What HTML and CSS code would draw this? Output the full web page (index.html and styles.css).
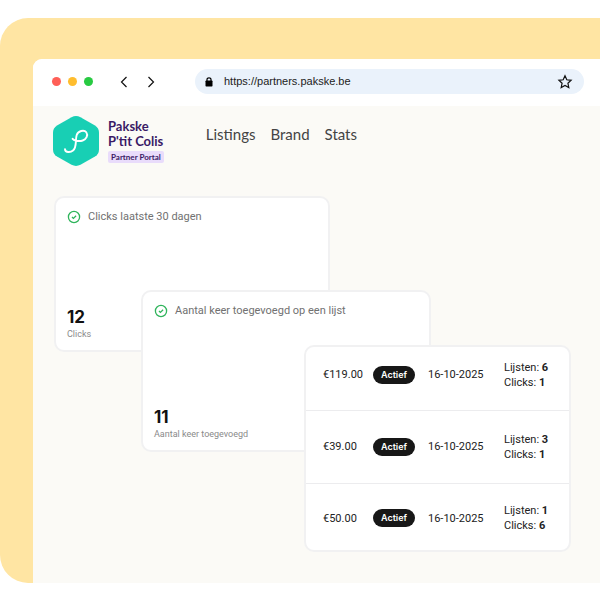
FILE: index.html
```html
<!DOCTYPE html>
<html lang="nl">
<head>
<meta charset="utf-8">
<meta name="viewport" content="width=device-width, initial-scale=1">
<title>Pakske Partner Portal</title>
<link rel="stylesheet" href="styles.css">
</head>
<body>
<div class="backdrop">
  <div class="browser">
    <div class="toolbar">
      <div class="lights"><span class="light red"></span><span class="light amber"></span><span class="light green"></span></div>
      <div class="history">
        <button type="button" aria-label="Back"><svg width="8" height="12" viewBox="0 0 8 12"><path d="M6.500 1 1.500 6l5 5"/></svg></button>
        <button type="button" aria-label="Forward"><svg width="8" height="12" viewBox="0 0 8 12"><path d="m1.500 1 5 5-5 5"/></svg></button>
      </div>
      <div class="address">
        <svg class="lock" width="8" height="10" viewBox="0 0 8 10"><path d="M2 4V2.500a2 1.700 0 0 1 4 0V4" fill="none" stroke="#000" stroke-width="1.200"/><rect x="0.500" y="3.500" width="7" height="6" rx="0.700"/></svg>
        <input type="text" aria-label="Address" value="https://partners.pakske.be">
        <button type="button" aria-label="Bookmark"><svg width="16" height="16" viewBox="0 0 16 16"><path d="m8 1.800 1.800 4 4.300.5-3.200 2.900.9 4.300L8 11.400l-3.800 2.100.9-4.300-3.200-2.900 4.300-.5z"/></svg></button>
      </div>
    </div>
    <header class="header">
      <a class="brand" href="#">
        <svg width="46" height="50" viewBox="0 0 46 50"><path d="M18.500 1.200q4.500-2.300 9 0l14.500 8.300q4 2.500 4 7v17q0 4.500-4 7l-14.500 8.300q-4.500 2.300-9 0L4 40.500q-4-2.500-4-7v-17q0-4.500 4-7z" fill="#18cfb4"/><path d="M12 33.300c.3 3.500 5.600 3.300 8 1.300 4.200-3.600 2-10.300 3.700-15.600 1.300-4.100 7.400-5.700 9.600-2.700 2.100 3-.1 7.100-3.600 8.200-3.600 1.200-8.500.3-10.100-1.700" fill="none" stroke="#fff" stroke-width="1.900" stroke-linecap="round"/></svg>
        <span class="brand-text"><span class="name">Pakske</span><span class="name">P'tit Colis</span><span class="portal">Partner Portal</span></span>
      </a>
      <nav class="nav"><a href="#">Listings</a><a href="#">Brand</a><a href="#">Stats</a></nav>
    </header>
    <main class="cards">
      <section class="card stat clicks">
        <h2><svg class="check" width="14" height="14" viewBox="0 0 14 14"><circle cx="7" cy="7" r="5.600"/><path d="m5 7 1.400 1.400L9.100 5.800"/></svg>Clicks laatste 30 dagen</h2>
        <div><p class="value">12</p><p class="caption">Clicks</p></div>
      </section>
      <section class="card stat added">
        <h2><svg class="check" width="14" height="14" viewBox="0 0 14 14"><circle cx="7" cy="7" r="5.600"/><path d="m5 7 1.400 1.400L9.100 5.800"/></svg>Aantal keer toegevoegd op een lijst</h2>
        <div><p class="value">11</p><p class="caption">Aantal keer toegevoegd</p></div>
      </section>
      <section class="card listings">
        <table>
          <tbody>
            <tr><td class="price">€119.00</td><td class="status"><span class="badge">Actief</span></td><td class="date">16-10-2025</td><td>Lijsten: <b>6</b><br>Clicks: <b>1</b></td></tr>
            <tr><td class="price">€39.00</td><td class="status"><span class="badge">Actief</span></td><td class="date">16-10-2025</td><td>Lijsten: <b>3</b><br>Clicks: <b>1</b></td></tr>
            <tr><td class="price">€50.00</td><td class="status"><span class="badge">Actief</span></td><td class="date">16-10-2025</td><td>Lijsten: <b>1</b><br>Clicks: <b>6</b></td></tr>
          </tbody>
        </table>
      </section>
    </main>
  </div>
</div>
</body>
</html>
```
FILE: styles.css
```css
* { box-sizing: border-box; }
body { margin: 0; padding: 18px 0; background: #fff; font-family: Roboto, sans-serif; color: #222; }
h2, p { margin: 0; }
a { color: inherit; text-decoration: none; }
button { display: flex; padding: 0; border: 0; background: none; }
button svg { fill: none; stroke: #111; stroke-width: 1.2; }

.backdrop { padding: 41px 0 0 33px; background: #ffe5a3; border-radius: 28px 0 0 28px; overflow: hidden; }
.browser { background: #fbfaf6; border-radius: 9px 0 0 0; overflow: hidden; padding-bottom: 31px; }

.toolbar { display: flex; align-items: center; height: 47px; padding: 0 16px 2px 19px; background: #fff; }
.lights { display: flex; gap: 7px; }
.light { width: 9px; height: 9px; border-radius: 50%; }
.red { background: #ff5f57; }
.amber { background: #ffbd2e; }
.green { background: #28ca42; }
.history { display: flex; gap: 19px; margin: 0 40px 0 27px; }
.address { flex: 1; display: flex; align-items: center; height: 25px; padding: 0 11px 0 10px; border-radius: 13px; background: #eaf2fb; }
.address input { flex: 1; min-width: 0; margin-left: 11px; padding: 0 0 1px; border: 0; background: none; font: 11px "Liberation Sans", sans-serif; color: #222; }

.header { display: flex; align-items: flex-start; gap: 42px; padding: 10px 20px 0; }
.brand { display: flex; gap: 9px; color: #3a1a66; font-family: Lato, sans-serif; }
.brand-text { display: flex; flex-direction: column; align-items: flex-start; padding-top: 3px; }
.name { font-size: 13px; line-height: 15px; font-weight: 700; }
.portal { margin-top: 2px; padding: 0 3px; border-radius: 2px; background: #e9dcfb; font-size: 8px; line-height: 12px; font-weight: 700; }
.nav { display: flex; gap: 15px; padding-top: 8px; font: 15px/20px Lato, sans-serif; color: #444; }

.cards { display: grid; grid-template-columns: minmax(0, 87fr) minmax(0, 163fr) minmax(0, 26fr) minmax(0, 101fr) minmax(0, 140fr); grid-template-rows: 94px 55px 7px 100px 100px; padding: 30px 29px 0 21px; }
.card { background: #fff; border: 2px solid #f1f1f2; border-radius: 10px; }
.stat { display: flex; flex-direction: column; justify-content: space-between; padding: 12px 11px 10px; }
.stat h2 { display: flex; align-items: center; gap: 7px; font-size: 11px; line-height: 14px; font-weight: 400; color: #717171; }
.check { fill: none; stroke: #2fb45b; stroke-width: 1.3; }
.value { font: 700 17px/20px Inter, sans-serif; color: #111; }
.caption { font: 9px/12px Roboto, sans-serif; color: #8a8a8a; margin-top: 1px; }
.clicks { grid-area: 1 / 1 / 4 / 4; }
.added { grid-area: 2 / 2 / 5 / 5; }
.listings { grid-area: 3 / 3 / 6 / 6; overflow: hidden; }

table { width: 100%; border-collapse: collapse; table-layout: fixed; font-size: 11px; line-height: 15px; }
td { height: 73px; padding: 0; white-space: nowrap; }
tr + tr td { border-top: 1px solid #ececee; }
tr:first-child td { height: 63px; padding-bottom: 7px; }
tr:last-child td { height: 70px; }
.price { width: 67px; padding-left: 17px; }
.status { width: 55px; }
.date { width: 76px; }
.badge { display: inline-block; padding: 0 8px; border-radius: 9px; background: #171717; color: #fff; font: 600 9px/18px Inter, sans-serif; vertical-align: middle; }
```
